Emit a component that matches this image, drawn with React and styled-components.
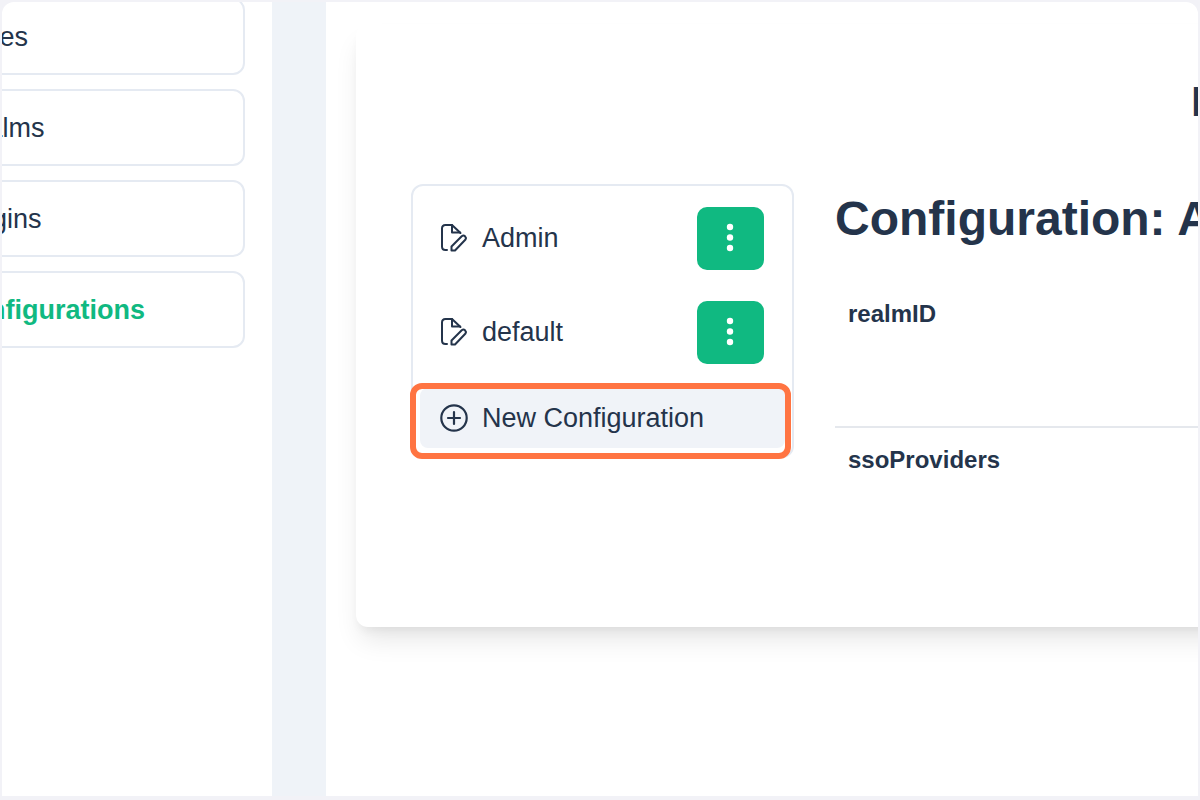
import React from 'react';
import styled, { createGlobalStyle } from 'styled-components';

const GlobalStyle = createGlobalStyle`
  * {
    box-sizing: border-box;
  }

  body {
    margin: 0;
    background-color: #f2f2f7;
    color: #24344b;
    font-family: 'Liberation Sans', Arial, sans-serif;
    font-size: 27px;
    line-height: 32px;
  }
`;

const Frame = styled.div`
  display: flex;
  height: 100vh;
  overflow: hidden;
  background-color: #fff;
  border: 2px solid #f2f2f7;
  border-bottom-width: 4px;
  border-radius: 14px 14px 0 0;
`;

const Sidebar = styled.nav`
  flex: none;
  width: 344px;
  margin-left: -74px;
  margin-top: -4px;
  padding-right: 27px;
`;

const NavList = styled.ul`
  display: flex;
  flex-direction: column;
  gap: 14px;
  margin: 0;
  padding: 0;
  list-style: none;
`;

const NavLink = styled.a`
  display: flex;
  align-items: center;
  height: 77px;
  padding: 0 23px;
  border: 2px solid #e5eaf2;
  border-radius: 12px;
  color: ${(props) => (props.$active ? '#10b981' : 'inherit')};
  font-weight: ${(props) => (props.$active ? 'bold' : 'normal')};
  text-decoration: none;
`;

const Gutter = styled.div`
  flex: none;
  width: 54px;
  background-color: #eff3f8;
`;

const Main = styled.main`
  flex: 1;
  min-width: 0;
  padding: 22px 0 0 30px;
`;

const Card = styled.section`
  min-width: 1400px;
  min-height: 603px;
  padding: 51px 55px;
  background-color: #fff;
  border-radius: 12px;
  box-shadow: 0 17px 27px -5px rgba(0, 0, 0, 0.1), 0 7px 10px -3px rgba(0, 0, 0, 0.05);
`;

const PageTitle = styled.h1`
  margin: 0 0 57px;
  padding-left: 780px;
  font-size: 43px;
  line-height: 52px;
  white-space: nowrap;
`;

const Columns = styled.div`
  display: flex;
  align-items: flex-start;
  gap: 41px;
`;

const ConfigList = styled.div`
  flex: none;
  width: 383px;
  border: 2px solid #e5eaf2;
  border-radius: 12px;
`;

const ConfigRows = styled.div`
  padding-top: 5px;
`;

const ConfigRow = styled.div`
  display: flex;
  align-items: center;
  gap: 14px;
  height: 94px;
  padding: 0 28px 0 27px;
`;

const ConfigName = styled.span`
  flex: 1;
`;

const MenuButton = styled.button`
  display: flex;
  align-items: center;
  justify-content: center;
  width: 67px;
  height: 63px;
  padding: 0;
  border: 0;
  border-radius: 10px;
  background-color: #10b981;
  color: #fff;
`;

const NewRow = styled.div`
  position: relative;
  padding: 9px 7px 8px;
`;

const NewButton = styled.button`
  display: flex;
  align-items: center;
  gap: 14px;
  width: 100%;
  height: 60px;
  padding: 0 20px;
  border: 0;
  border-radius: 8px;
  background-color: #f0f3f8;
  color: inherit;
  font: inherit;
`;

const Highlight = styled.div`
  position: absolute;
  inset: 4px 1px -3px -3px;
  border: 6px solid #ff7442;
  border-radius: 12px;
  pointer-events: none;
`;

const Details = styled.div`
  flex: 1;
`;

const DetailsTitle = styled.h2`
  margin: 7px 0 53px;
  font-size: 48px;
  line-height: 56px;
`;

const Field = styled.div`
  height: ${(props) => (props.$last ? 'auto' : '128px')};
  padding: ${(props) => (props.$last ? '18px' : '0')} 13px 0;
  border-bottom: ${(props) => (props.$last ? '0' : '2px solid #e5e8ed')};
  font-size: 24px;
  line-height: 28px;
  font-weight: bold;
`;

const EditIcon = () => (
  <svg width="28" height="28" viewBox="0 0 28 28" fill="none" stroke="currentColor" strokeWidth="2" strokeLinejoin="round" strokeLinecap="round" aria-hidden="true">
    <path d="M7 26H5.500Q2 26 2 22.500V4.500Q2 1 5.500 1H12L20.500 9" />
    <path d="M12 1V8.500H20" />
    <path d="M11.500 26.500V22.500L21.700 12.300Q23.500 10.800 25 12.300T25.500 15.500L15 26.500Z" />
  </svg>
);

const PlusIcon = () => (
  <svg width="28" height="28" viewBox="0 0 28 28" fill="none" stroke="currentColor" strokeWidth="2.200" strokeLinecap="round" aria-hidden="true">
    <circle cx="14" cy="14" r="12.700" />
    <path d="M14 8V20M8 14H20" />
  </svg>
);

const DotsIcon = () => (
  <svg width="9" height="30" viewBox="0 0 9 30" fill="currentColor" aria-hidden="true">
    <circle cx="4" cy="4" r="3.200" />
    <circle cx="4" cy="14.500" r="3.200" />
    <circle cx="4" cy="25" r="3.200" />
  </svg>
);

const links = ['Zones', 'Realms', 'Plugins', 'Configurations'];
const configs = ['Admin', 'default'];

const App = () => {
  return (
    <>
      <GlobalStyle />
      <Frame>
        <Sidebar>
          <NavList>
            {links.map((link) => (
              <li key={link}>
                <NavLink href="#" $active={link === 'Configurations'}>{link}</NavLink>
              </li>
            ))}
          </NavList>
        </Sidebar>
        <Gutter />
        <Main>
          <Card>
            <PageTitle>Internal Configuration</PageTitle>
            <Columns>
              <ConfigList>
                <ConfigRows>
                  {configs.map((name) => (
                    <ConfigRow key={name}>
                      <EditIcon />
                      <ConfigName>{name}</ConfigName>
                      <MenuButton type="button" aria-label={`${name} menu`}>
                        <DotsIcon />
                      </MenuButton>
                    </ConfigRow>
                  ))}
                </ConfigRows>
                <NewRow>
                  <NewButton type="button">
                    <PlusIcon />
                    New Configuration
                  </NewButton>
                  <Highlight />
                </NewRow>
              </ConfigList>
              <Details>
                <DetailsTitle>Configuration: Admin</DetailsTitle>
                <Field>realmID</Field>
                <Field $last>ssoProviders</Field>
              </Details>
            </Columns>
          </Card>
        </Main>
      </Frame>
    </>
  );
};

export default App;
